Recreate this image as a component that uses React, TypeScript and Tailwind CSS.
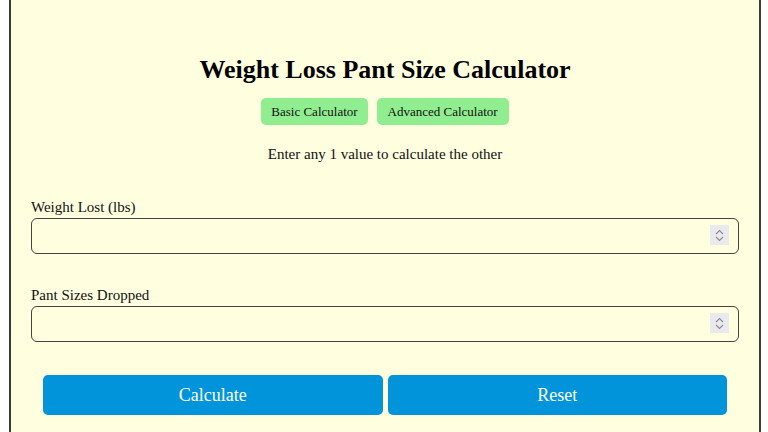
import React from "react";

function NumberField({ label }: { label: string }) {
  return (
    <div className="flex flex-col">
      <label className="text-[15px] leading-[18px]">{label}</label>
      <div className="relative mt-[2px]">
        <input
          type="number"
          className="h-[36px] w-full rounded-[6px] border border-[#444] bg-transparent px-2 text-[15px] outline-none [appearance:textfield] [&::-webkit-inner-spin-button]:appearance-none"
        />
        {/* spinner, drawn since headless doesn't show it */}
        <div className="pointer-events-none absolute right-[10px] top-[7px] flex h-[20px] w-[19px] flex-col items-center justify-center gap-[1px] bg-[#e9e9ee]">
          <svg width="9" height="6" viewBox="0 0 9 6" fill="none" stroke="#8a8a92" strokeWidth="1.1">
            <path d="M1 5 L4.5 1.5 L8 5" />
          </svg>
          <svg width="9" height="6" viewBox="0 0 9 6" fill="none" stroke="#8a8a92" strokeWidth="1.1">
            <path d="M1 1 L4.5 4.5 L8 1" />
          </svg>
        </div>
      </div>
    </div>
  );
}

export default function App() {
  return (
    <div className="min-h-[432px] bg-white font-['Liberation_Serif','Times_New_Roman',serif] text-[#111]">
      <div className="ml-[9px] h-[432px] w-[752px] border-x-2 border-[#3a3a3a] bg-[#ffffe0] px-5 pt-[55px]">
        <h1 className="text-center text-[26px] font-bold leading-[30px] text-black">
          Weight Loss Pant Size Calculator
        </h1>

        <div className="mt-[13px] flex justify-center gap-[9px]">
          <button className="h-[27px] rounded-[5px] bg-[#90ee90] px-[10px] text-[13px] text-[#111]">
            Basic Calculator
          </button>
          <button className="h-[27px] rounded-[5px] bg-[#90ee90] px-[11px] text-[13px] text-[#111]">
            Advanced Calculator
          </button>
        </div>

        <p className="mt-[20px] text-center text-[15px] leading-[18px]">
          Enter any 1 value to calculate the other
        </p>

        <div className="mt-[35px]">
          <NumberField label="Weight Lost (lbs)" />
        </div>

        <div className="mt-[32px]">
          <NumberField label="Pant Sizes Dropped" />
        </div>

        <div className="mt-[33px] flex gap-[5px] px-3">
          <button className="h-[40px] flex-1 rounded-[5px] bg-[#0294da] text-[18px] text-white">
            Calculate
          </button>
          <button className="h-[40px] flex-1 rounded-[5px] bg-[#0294da] text-[18px] text-white">
            Reset
          </button>
        </div>
      </div>
    </div>
  );
}
